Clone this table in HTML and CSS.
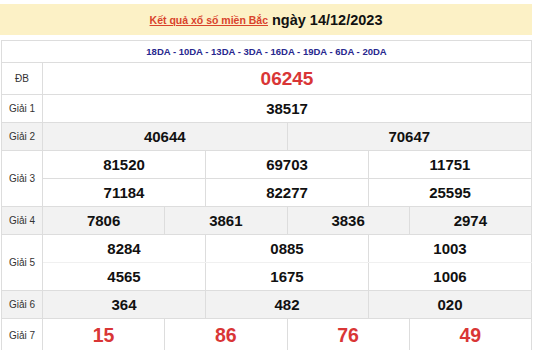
FILE: index.html
```html
<!DOCTYPE html>
<html lang="vi">
<head>
<meta charset="utf-8">
<title>Kết quả xổ số miền Bắc</title>
<link rel="stylesheet" href="styles.css">
</head>
<body>
<div class="wrap">
  <div class="head">
    <a class="head-link" href="#">Kết quả xổ số miền Bắc</a>
    <span class="head-date">ngày 14/12/2023</span>
  </div>
  <table class="kq">
    <colgroup>
      <col class="c-label">
      <col><col><col><col><col><col><col><col><col><col><col><col>
    </colgroup>
    <tbody>
      <tr class="r-code"><td colspan="13" class="codes">18DA - 10DA - 13DA - 3DA - 16DA - 19DA - 6DA - 20DA</td></tr>
      <tr class="r-db"><td class="lbl">ĐB</td><td colspan="12" class="db">06245</td></tr>
      <tr><td class="lbl">Giải 1</td><td colspan="12">38517</td></tr>
      <tr class="alt"><td class="lbl">Giải 2</td><td colspan="6">40644</td><td colspan="6">70647</td></tr>
      <tr><td class="lbl" rowspan="2">Giải 3</td><td colspan="4">81520</td><td colspan="4">69703</td><td colspan="4">11751</td></tr>
      <tr><td colspan="4">71184</td><td colspan="4">82277</td><td colspan="4">25595</td></tr>
      <tr class="alt"><td class="lbl">Giải 4</td><td colspan="3">7806</td><td colspan="3">3861</td><td colspan="3">3836</td><td colspan="3">2974</td></tr>
      <tr class="r-top"><td class="lbl" rowspan="2">Giải 5</td><td colspan="4">8284</td><td colspan="4">0885</td><td colspan="4">1003</td></tr>
      <tr class="r-bot"><td colspan="4">4565</td><td colspan="4">1675</td><td colspan="4">1006</td></tr>
      <tr class="alt"><td class="lbl">Giải 6</td><td colspan="4">364</td><td colspan="4">482</td><td colspan="4">020</td></tr>
      <tr class="r-g7"><td class="lbl">Giải 7</td><td colspan="3" class="g7">15</td><td colspan="3" class="g7">86</td><td colspan="3" class="g7">76</td><td colspan="3" class="g7">49</td></tr>
    </tbody>
  </table>
</div>
</body>
</html>
```

FILE: styles.css
```css
html, body {
  margin: 0;
  padding: 0;
  background: #ffffff;
}

body {
  font-family: "Liberation Sans", Arial, sans-serif;
  color: #111111;
}

.wrap {
  width: 532px;
  padding-top: 4px;
}

.head {
  height: 31px;
  background: #fcf1c6;
  display: flex;
  align-items: center;
  justify-content: center;
  gap: 4px;
  padding-top: 1px;
  box-sizing: border-box;
}

.head-link {
  color: #d9432c;
  font-size: 10.5px;
  font-weight: bold;
  text-decoration: underline;
}

.head-date {
  font-size: 14.5px;
  font-weight: bold;
  color: #111111;
}

.kq {
  margin: 5px 0 0 1px;
  width: 531px;
  border-collapse: collapse;
  table-layout: fixed;
}

.c-label {
  width: 41px;
}

.kq td {
  border: 1px solid #dddddd;
  padding: 0;
  height: 28px;
  box-sizing: border-box;
  text-align: center;
  vertical-align: middle;
  font-size: 15px;
  font-weight: bold;
  color: #111111;
}

.kq tr.r-code td {
  height: 22px;
}

.kq td.codes {
  font-size: 9.5px;
  color: #27278e;
}

.kq tr.r-db td {
  height: 32px;
}

.kq td.db {
  font-size: 19px;
  color: #d93636;
}

.kq tr.alt td {
  background: #f2f2f2;
}

.kq td.lbl {
  font-size: 10px;
  font-weight: normal;
  color: #333333;
}

.kq tr.r-top td:not(.lbl) {
  border-bottom-color: #f0f0f0;
}

.kq tr.r-g7 td {
  height: 34px;
}

.kq td.g7 {
  font-size: 19.5px;
  color: #d93636;
}
```
